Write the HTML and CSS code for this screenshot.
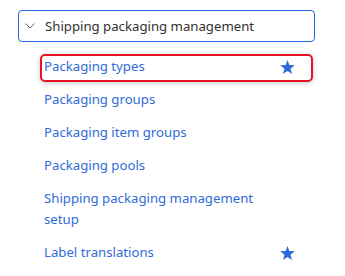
FILE: index.html
```html
<!DOCTYPE html>
<html lang="en">
<head>
    <meta charset="UTF-8">
    <title>Shipping packaging management</title>
    <link rel="stylesheet" href="styles.css">
</head>
<body>
    <div class="nav">
        <div class="group-header">
            <svg class="chevron" width="10" height="6" viewBox="0 0 10 6">
                <polyline points="0.5,0.5 5,5 9.5,0.5" fill="none" stroke="#605e5c" stroke-width="1"/>
            </svg>
            <span>Shipping packaging management</span>
        </div>
        <ul class="items">
            <li class="item selected">
                <span class="label">Packaging types</span>
                <svg class="star" width="15" height="14" viewBox="0 0 24 23">
                    <polygon points="12,0 15,8.2 24,8.6 17,14.2 19.4,23 12,18 4.6,23 7,14.2 0,8.6 9,8.2"/>
                </svg>
            </li>
            <li class="item"><span class="label">Packaging groups</span></li>
            <li class="item"><span class="label">Packaging item groups</span></li>
            <li class="item"><span class="label">Packaging pools</span></li>
            <li class="item"><span class="label">Shipping packaging management setup</span></li>
            <li class="item">
                <span class="label">Label translations</span>
                <svg class="star" width="15" height="14" viewBox="0 0 24 23">
                    <polygon points="12,0 15,8.2 24,8.6 17,14.2 19.4,23 12,18 4.6,23 7,14.2 0,8.6 9,8.2"/>
                </svg>
            </li>
        </ul>
    </div>
</body>
</html>
```

FILE: styles.css
```css
body {
    margin: 0;
    background: #ffffff;
    font-family: "Noto Sans", "Open Sans", sans-serif;
    font-size: 13.2px;
}

.nav {
    padding: 10px 0 0 18px;
}

.group-header {
    width: 295px;
    height: 30px;
    border: 1px solid #2266e3;
    border-radius: 4px;
    display: flex;
    align-items: center;
    color: #323130;
}

.chevron {
    margin: 0 10px 0 6px;
}

.items {
    list-style: none;
    margin: 12px 0 0 22px;
    padding: 0;
    width: 273px;
}

.item {
    display: flex;
    align-items: center;
    padding: 0 16px 3px 2px;
    line-height: 21px;
    border: 2px solid transparent;
    border-radius: 5px;
    margin-bottom: 5px;
    color: #2f6bd8;
}

.item.selected {
    border-color: #e3141e;
    box-shadow: 0 1px 5px rgba(0, 0, 0, 0.22);
}

.label {
    flex: 1;
    padding-right: 20px;
}

.star {
    fill: #2f6bd8;
    margin-top: 1px;
}
```
